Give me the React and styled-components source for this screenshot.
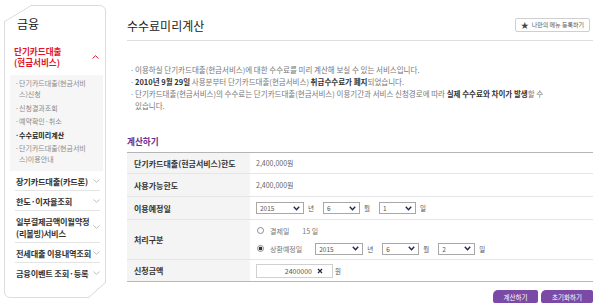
import React from "react";
import styled, { createGlobalStyle } from "styled-components";

const GlobalStyle = createGlobalStyle`
  html, body {
    margin: 0;
    padding: 0;
    background: #fff;
  }
  body {
    width: 600px;
    height: 307px;
    overflow: hidden;
    font-family: "Noto Sans CJK KR", "Noto Sans", sans-serif;
    color: #333;
  }
`;

const Page = styled.div`
  display: flex;
  align-items: flex-start;
  padding-left: 4px;
`;

/* ---------- sidebar ---------- */

const Side = styled.aside`
  position: relative;
  box-sizing: border-box;
  width: 102px;
  height: 293px;
  margin-top: 5px;
  padding-top: 10px;
  border: 1px solid #dcdcdc;
  border-radius: 6px;

  &::before {
    content: "";
    position: absolute;
    top: -1px;
    left: -1px;
    width: 28px;
    height: 17px;
    background: linear-gradient(
      to bottom right,
      #fff calc(50% - 0.7px),
      #d4d4d4 50%,
      transparent calc(50% + 0.7px)
    );
  }

  &::after {
    content: "";
    position: absolute;
    bottom: -1px;
    right: -1px;
    width: 18px;
    height: 16px;
    background: linear-gradient(
      to top left,
      #fff calc(50% - 0.7px),
      #d4d4d4 50%,
      transparent calc(50% + 0.7px)
    );
  }
`;

const SideTitle = styled.h2`
  margin: 0;
  padding-left: 12px;
  font-size: 12px;
  line-height: 16px;
  font-weight: 400;
  color: #222;
`;

const OpenGroup = styled.div`
  display: flex;
  align-items: center;
  justify-content: space-between;
  margin-top: 14px;
  padding: 0 6px 0 9px;
  font-size: 8.6px;
  line-height: 11px;
  font-weight: 700;
  color: #e3142a;
`;

const SubBox = styled.ul`
  list-style: none;
  margin: 7px 2px 0 5px;
  padding: 3px 0 6px 5px;
  background: #f6f6f6;
`;

const SubItem = styled.li`
  display: flex;
  margin-top: ${p => (p.$first ? 0 : 2.5)}px;
  font-size: 7px;
  line-height: 11px;
  white-space: nowrap;
  color: ${p => (p.$active ? "#222" : "#8a8a8a")};
  font-weight: ${p => (p.$active ? 700 : 400)};
`;

const Dot = styled.span`
  flex: none;
  width: ${p => p.$w || 4}px;
`;

const Menu = styled.ul`
  list-style: none;
  margin: 0 5px 0 10px;
  padding: 0;
`;

const MenuItem = styled.li`
  display: flex;
  align-items: center;
  justify-content: space-between;
  padding: 4px 0 3px 1px;
  font-size: 8.2px;
  line-height: 12px;
  font-weight: 700;
  letter-spacing: -0.2px;
  white-space: nowrap;
  color: #333;
  border-bottom: 1px solid #e4e4e4;

  &:last-child {
    border-bottom: none;
  }

  svg {
    margin-left: -3px;
  }
`;

const Chevron = ({ up, color }) => (
  <svg width="7" height="4" viewBox="0 0 7 4" style={{ flex: "none" }}>
    <path
      d={up ? "M0.5 3.5 L3.5 0.7 L6.5 3.5" : "M0.5 0.5 L3.5 3.3 L6.5 0.5"}
      fill="none"
      stroke={color}
      strokeWidth="1"
    />
  </svg>
);

/* ---------- main ---------- */

const Main = styled.main`
  width: 466px;
  margin-left: 21px;
`;

const Header = styled.header`
  box-sizing: border-box;
  display: flex;
  align-items: center;
  justify-content: space-between;
  height: 41px;
  padding: 12px 3px 0 0;
  border-bottom: 1px solid #dedede;
`;

const Title = styled.h1`
  margin: 0;
  font-size: 12px;
  line-height: 28px;
  font-weight: 400;
  color: #222;
`;

const MyMenuButton = styled.button`
  box-sizing: border-box;
  display: flex;
  align-items: center;
  gap: 3px;
  height: 14px;
  margin-top: -3px;
  padding: 0 5px;
  border: 1px solid #cfcfcf;
  border-radius: 2px;
  background: #fff;
  font-family: inherit;
  font-size: 6px;
  color: #555;
`;

const Star = styled.span`
  font-size: 8px;
  color: #444;
`;

const Notes = styled.ul`
  list-style: none;
  margin: 23px 0 0;
  padding: 0 0 0 3px;
`;

const Note = styled.li`
  display: flex;
  font-size: 7.5px;
  line-height: 12px;
  white-space: nowrap;
  color: #777;

  b {
    color: #333;
  }
`;

const SectionTitle = styled.h3`
  margin: 23px 0 0;
  font-size: 8.6px;
  line-height: 12px;
  font-weight: 700;
  color: #6a2b90;
`;

const Table = styled.div`
  margin-top: 5px;
  border-top: 1px solid #b5b5b5;
  border-bottom: 1px solid #b8b8b8;
`;

const Row = styled.div`
  display: grid;
  grid-template-columns: 123px 1fr;
  height: ${p => p.$h}px;
  border-bottom: 1px solid #e6e6e6;

  &:last-child {
    border-bottom: none;
  }
`;

const Label = styled.div`
  display: flex;
  align-items: center;
  padding-left: 7px;
  background: #f4f4f4;
  font-size: 8px;
  font-weight: 700;
  color: #333;
`;

const Value = styled.div`
  display: flex;
  align-items: center;
  padding-left: 6px;
  font-size: 7px;
  color: #666;
`;

const Choices = styled.div`
  display: flex;
  flex-direction: column;
  justify-content: center;
  gap: 6px;
  padding-left: 6px;
`;

const Line = styled.div`
  display: flex;
  align-items: center;
  height: 12px;
`;

const SelectBox = styled.div`
  box-sizing: border-box;
  display: flex;
  align-items: center;
  justify-content: space-between;
  width: ${p => p.$w}px;
  height: 12px;
  margin-left: ${p => p.$ml || 0}px;
  padding: 0 3px;
  border: 1px solid #a8a8a8;
  background: #fff;
  font-size: 6.5px;
  color: #555;
`;

const Unit = styled.span`
  margin: 0 ${p => (p.$last ? 0 : 9)}px 0 ${p => p.$ml ?? 4}px;
  font-size: 6.5px;
  color: #555;
`;

const Radio = styled.span`
  box-sizing: border-box;
  flex: none;
  width: 7px;
  height: 7px;
  margin: 0 6px 0 1px;
  border: 1px solid #8a8a8a;
  border-radius: 50%;
  background: ${p =>
    p.$on ? "radial-gradient(circle, #333 0 1.6px, #fff 2.1px)" : "#fff"};
`;

const Text = styled.span`
  margin-left: ${p => p.$ml || 0}px;
  font-size: 7px;
  color: #777;
`;

const AmountInput = styled.div`
  box-sizing: border-box;
  display: flex;
  align-items: center;
  justify-content: flex-end;
  gap: 5px;
  width: 77px;
  height: 14px;
  padding-right: 9px;
  border: 1px solid #d0d0d0;
  font-size: 7px;
  color: #555;
`;

const Actions = styled.div`
  display: flex;
  justify-content: flex-end;
  gap: 3px;
  margin-top: 8px;
`;

const ActionButton = styled.button`
  width: ${p => p.$w}px;
  height: 13px;
  padding: 0;
  border: none;
  border-radius: 5px 2px 2px 2px;
  background: #7b4aa6;
  font-family: inherit;
  font-size: 6.5px;
  color: #fff;
`;

const Arrow = () => (
  <svg width="7" height="5" viewBox="0 0 7 5">
    <path d="M0.8 0.8 L3.5 3.8 L6.2 0.8" fill="none" stroke="#1d2a4a" strokeWidth="1.4" />
  </svg>
);

const Select = ({ value, w, ml }) => (
  <SelectBox $w={w} $ml={ml}>
    <span>{value}</span>
    <Arrow />
  </SelectBox>
);

const DatePick = ({ year, month, day, ml }) => (
  <>
    <Select value={year} w={48} ml={ml} />
    <Unit>년</Unit>
    <Select value={month} w={37} />
    <Unit>월</Unit>
    <Select value={day} w={37} />
    <Unit $last>일</Unit>
  </>
);

const subItems = [
  { text: ["단기카드대출(현금서비", "스)신청"] },
  { text: ["신청결과조회"] },
  { text: ["예약확인·취소"] },
  { text: ["수수료미리계산"], active: true },
  { text: ["단기카드대출(현금서비", "스)이용안내"] },
];

const menuItems = [
  ["장기카드대출(카드론)"],
  ["한도·이자율조회"],
  ["일부결제금액이월약정", "(리볼빙)서비스"],
  ["전세대출 이용내역조회"],
  ["금융이벤트 조회·등록"],
];

const withBreaks = lines =>
  lines.map((l, i) => (
    <React.Fragment key={i}>
      {i > 0 && <br />}
      {l}
    </React.Fragment>
  ));

export default function App() {
  return (
    <>
      <GlobalStyle />
      <Page>
        <Side>
          <SideTitle>금융</SideTitle>
          <OpenGroup>
            <span>
              단기카드대출
              <br />
              (현금서비스)
            </span>
            <Chevron up color="#e3142a" />
          </OpenGroup>
          <SubBox>
            {subItems.map((item, i) => (
              <SubItem key={i} $first={i === 0} $active={item.active}>
                <Dot>·</Dot>
                <span>{withBreaks(item.text)}</span>
              </SubItem>
            ))}
          </SubBox>
          <Menu>
            {menuItems.map((lines, i) => (
              <MenuItem key={i}>
                <span>{withBreaks(lines)}</span>
                <Chevron color="#bdbdbd" />
              </MenuItem>
            ))}
          </Menu>
        </Side>

        <Main>
          <Header>
            <Title>수수료미리계산</Title>
            <MyMenuButton>
              <Star>★</Star>
              나만의 메뉴 등록하기
            </MyMenuButton>
          </Header>

          <Notes>
            <Note>
              <Dot $w={5}>·</Dot>
              <span>이용하실 단기카드대출(현금서비스)에 대한 수수료를 미리 계산해 보실 수 있는 서비스입니다.</span>
            </Note>
            <Note>
              <Dot $w={5}>·</Dot>
              <span>
                <b>2010년 9월 29일</b> 사용분부터 단기카드대출(현금서비스) <b>취급수수료가 폐지</b>되었습니다.
              </span>
            </Note>
            <Note>
              <Dot $w={5}>·</Dot>
              <span>
                단기카드대출(현금서비스)의 수수료는 단기카드대출(현금서비스) 이용기간과 서비스 신청경로에 따라{" "}
                <b>실제 수수료와 차이가 발생</b>할 수
                <br />
                있습니다.
              </span>
            </Note>
          </Notes>

          <SectionTitle>계산하기</SectionTitle>
          <Table>
            <Row $h={20}>
              <Label>단기카드대출(현금서비스)한도</Label>
              <Value>2,400,000원</Value>
            </Row>
            <Row $h={22}>
              <Label>사용가능한도</Label>
              <Value>2,400,000원</Value>
            </Row>
            <Row $h={22}>
              <Label>이용예정일</Label>
              <Value>
                <DatePick year="2015" month="6" day="1" />
              </Value>
            </Row>
            <Row $h={39}>
              <Label>처리구분</Label>
              <Choices>
                <Line>
                  <Radio />
                  <Text>결제일</Text>
                  <Text $ml={13}>15 일</Text>
                </Line>
                <Line>
                  <Radio $on />
                  <Text>상환예정일</Text>
                  <DatePick year="2015" month="6" day="2" ml={13} />
                </Line>
              </Choices>
            </Row>
            <Row $h={21}>
              <Label>신청금액</Label>
              <Value>
                <AmountInput>
                  <span>2400000</span>
                  <svg width="6" height="6" viewBox="0 0 6 6">
                    <path d="M1 1 L5 5 M5 1 L1 5" stroke="#1d2a4a" strokeWidth="1.2" />
                  </svg>
                </AmountInput>
                <Unit $ml={2} $last>원</Unit>
              </Value>
            </Row>
          </Table>

          <Actions>
            <ActionButton $w={45}>계산하기</ActionButton>
            <ActionButton $w={52}>초기화하기</ActionButton>
          </Actions>
        </Main>
      </Page>
    </>
  );
}
